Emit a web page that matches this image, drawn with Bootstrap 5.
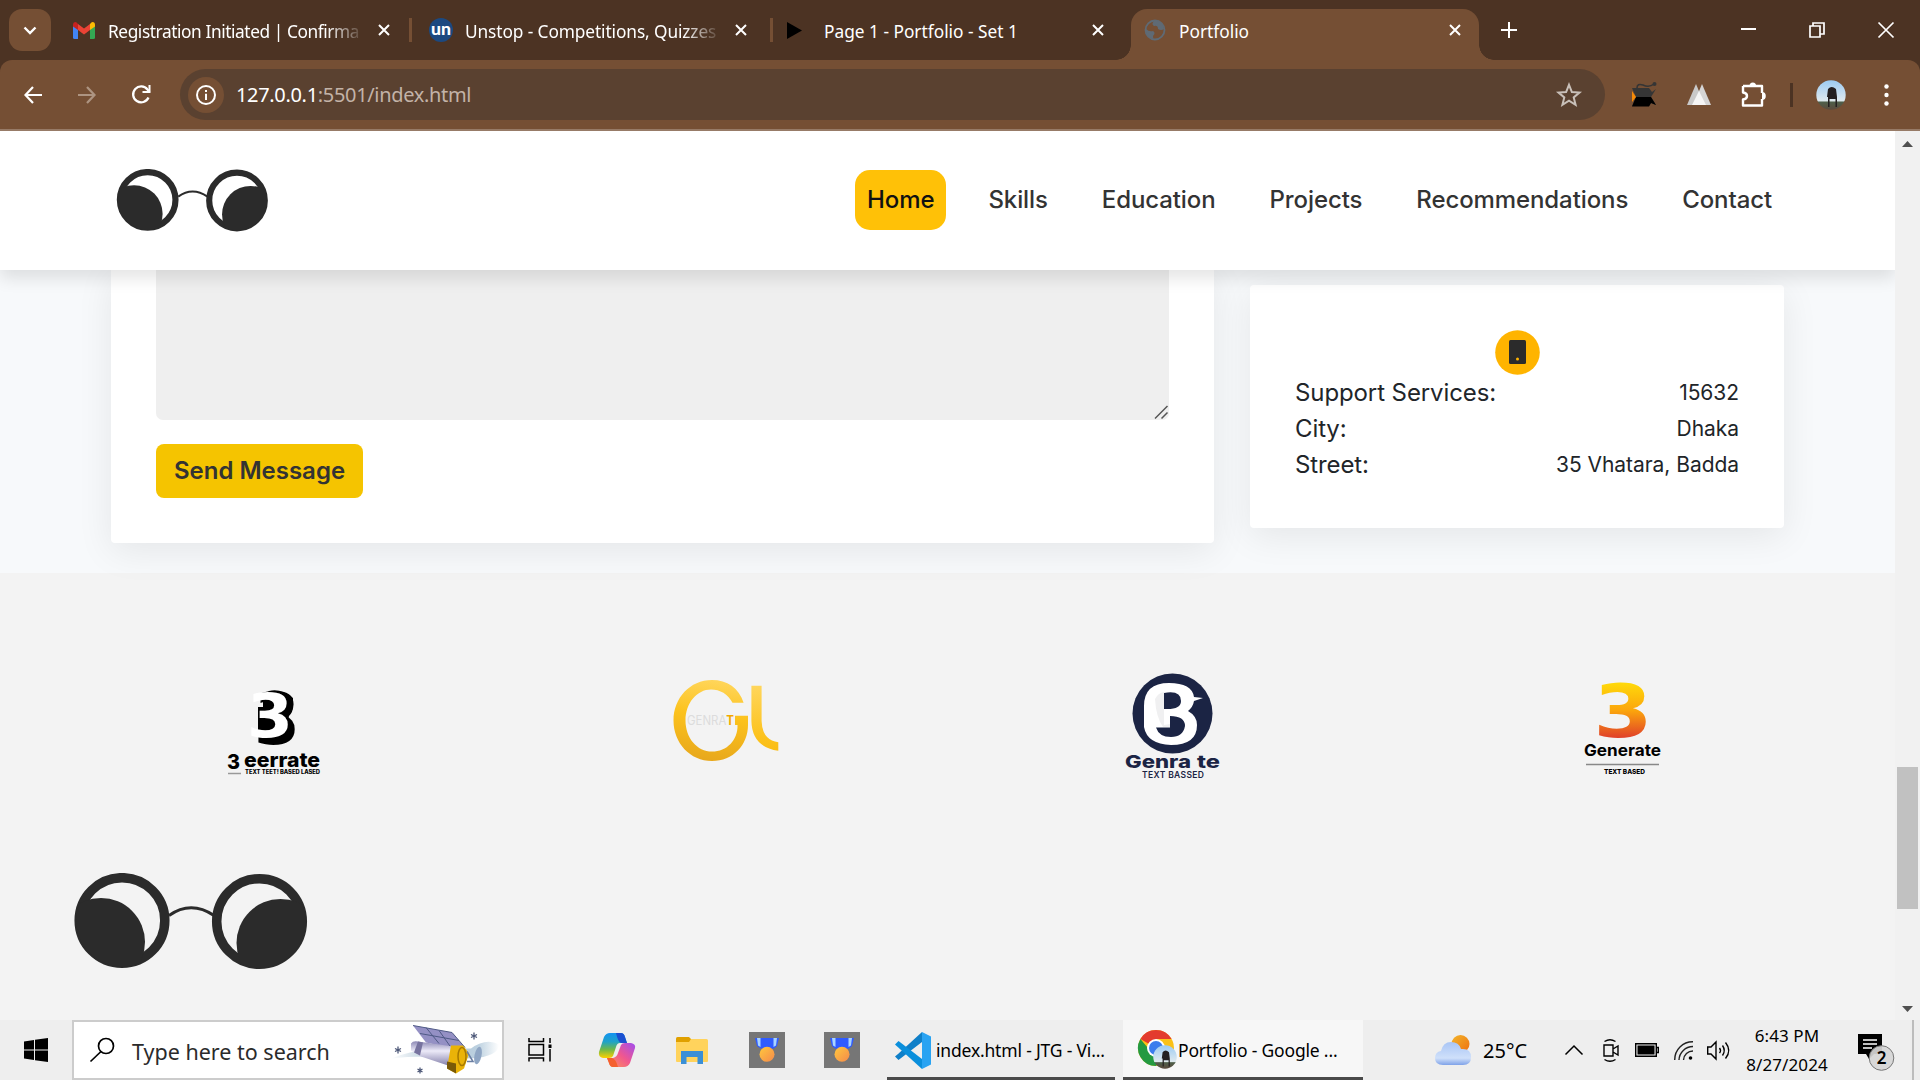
<!DOCTYPE html>
<html lang="en">
<head>
<meta charset="utf-8">
<title>Portfolio</title>
<link href="https://cdn.jsdelivr.net/npm/bootstrap@5.3.0/dist/css/bootstrap.min.css" rel="stylesheet">
<style>
  body { width: 1920px; height: 1080px; overflow: hidden; font-family: "Noto Sans", "Open Sans", sans-serif; color: #000; background: #4c3323; }
  svg { display: block; flex: none; overflow: visible; }
  .ui { white-space: nowrap; line-height: 1; }

  /* browser chrome */
  .tabstrip { height: 60px; background: #4c3323; color: #fff; }
  .tab-menu { width: 42px; height: 42px; margin: 0 9px; border-radius: 13px; background: #754f34; }
  .btab { height: 60px; padding-left: 13px; padding-right: 22px; }
  .btab .ttl { font-size: 17.3px; overflow: hidden; padding: 6px 0 3px; }
  .btab .fade-end { -webkit-mask-image: linear-gradient(90deg, #000 86%, transparent 101%); mask-image: linear-gradient(90deg, #000 86%, transparent 101%); }
  .btab .icon-box { width: 24px; margin-right: 11px; }
  .t1 { width: 352px; } .t2 { width: 361px; padding-left: 17px; padding-right: 26px; } .t3 { width: 358px; } .t4 { width: 348px; }
  .t1 .ttl { letter-spacing: -.42px; }
  .t2 .icon-box { margin-right: 12px; }
  .t2 .ttl { letter-spacing: -.1px; }
  .t3 { padding-left: 11px; }
  .t3 .icon-box { margin-right: 16px; padding-left: 1px; }
  .t3 .x-mark { margin-right: 5px; }
  .t4 { padding-right: 18px !important; }
  .tab-sep { width: 3px; height: 24px; margin-left: -3px; background: #754f34; }
  .tab-live { height: 51px; background: #754f34; border-radius: 16px 16px 0 0; position: relative; align-self: flex-end; padding-bottom: 9px; }
  .tab-live::before, .tab-live::after { content: ""; position: absolute; bottom: 0; width: 15px; height: 15px; }
  .tab-live::before { left: -15px; background: radial-gradient(circle at 0 0, transparent 14.5px, #754f34 15px); }
  .tab-live::after { right: -15px; background: radial-gradient(circle at 100% 0, transparent 14.5px, #754f34 15px); }
  .new-tab { margin-left: 22px; }
  .win-btns > * { width: 68.5px; }
  .toolbar { height: 71px; background: #754f34; border-bottom: 2px solid #977b67; border-radius: 12px 12px 0 0; padding-left: 6px; }
  .slot { width: 54px; display: flex; justify-content: center; flex: none; }
  .slot-w { width: 55px; }
  .slot-dots { width: 57px; }
  .slot-sep { width: 22px; }
  .slot-sep div { width: 3px; height: 24px; background: #4c3323; }
  .omnibox { width: 1425px; height: 51px; border-radius: 26px; background: #5a4130; margin: 0 11px 0 12px; padding: 0 24px 0 8px; }
  .site-chip { width: 36px; height: 36px; background: #754f34; }
  .url { font-size: 20px; letter-spacing: -.33px; color: #fff; margin-left: 12px; }
  .url .dim { color: #c3b3a8; }

  /* portfolio page */
  .viewport { height: 889px; }
  .webpage { width: 1895px; font-family: Inter, "Liberation Sans", sans-serif; background: #f7f9fb; overflow: hidden; }
  .site-head { height: 139px; background: #fff; padding: 0 111px 2px 115.5px; box-shadow: 0 8px 16px rgba(0,0,0,.11); z-index: 2; position: relative; }
  .site-head .navbar-brand svg { margin-top: 2px; }
  .site-head .navbar-nav { gap: 30px; }
  .site-head .nav-link { height: 60px; padding: 0 12px !important; line-height: 60px; font-size: 24px; letter-spacing: -.1px; font-weight: 480; color: #333; border-radius: 15px; white-space: nowrap; }
  .site-head .nav-link.active { background: #ffc107; color: #111; }
  .contact { height: 303px; padding: 0 111px; }
  .panel { background: #fff; border-radius: 4px; box-shadow: 0 8px 36px rgba(0,0,0,.08); }
  .form-panel { width: 1103px; height: 273px; padding: 0 45px; border-radius: 0 0 4px 4px; }
  .msg-box { height: 150px; border-radius: 0 0 7px 7px; background: #efefef; padding: 0 1px 1px 0; }
  .send { width: 207px; height: 54px; margin-top: 24px; padding: 0; border: 0; border-radius: 8px; background: #f5c400; color: #333; font-size: 24px; font-weight: 600; white-space: nowrap; }
  .info-panel { width: 534px; height: 243px; margin-top: 15px; padding: 45px 45px 0; }
  .info-line { height: 36px; font-size: 24px; letter-spacing: -.1px; color: #212529; }
  .info-line .val { font-size: 21px; letter-spacing: -.05px; }
  .foot { height: 447px; background: #f3f3f3; }
  .brands { padding: 100px 0 0; height: 206px; }
  .logo-a { margin: 17px 0 0 227px; }
  .logo-b { margin: 7px 0 0 353px; }
  .logo-c { margin: 0 0 0 346px; }
  .logo-d { margin: 10px 0 0 364px; }
  .foot-logo { margin: 94px 0 0 73.5px; }
  .scroller { width: 25px; background: #f1f1f1; }
  .arrow-up { margin-top: 10px; }
  .thumb { width: 21px; height: 142px; margin-top: 620px; background: #c1c1c1; }

  /* taskbar */
  .taskbar { height: 60px; background: #eee; color: #000; }
  .start { width: 72px; }
  .search { width: 432px; height: 60px; background: #fff; border: 2px solid #ccc; padding-left: 16px; }
  .search .ui { font-size: 21.5px; color: #2b2b2b; margin-left: 18px; padding-top: 3px; }
  .tb { width: 75px; display: flex; justify-content: center; }
  .task-view { margin-left: -3px; }
  .task { height: 60px; border-bottom: 3px solid #4a4a4a; padding-top: 3px; }
  .task .ui { font-size: 17.5px; letter-spacing: -.18px; margin-left: 4px; padding-top: 2px; }
  .task-code { width: 228px; padding-left: 8px; margin-right: 8px; }
  .task-web { width: 240px; padding-left: 15px; background: #f7f7f7; }
  .task-web .ui { margin-left: 0; }
  .tray { margin-left: 72px; }
  .temp { font-size: 20px; width: 60px; margin-left: 12px; padding-top: 2px; }
  .tray-up { margin-left: 22px; }
  .tray-cam { margin-left: 20px; }
  .tray-bat { margin-left: 16px; }
  .tray-wifi { margin-left: 15px; }
  .tray-vol { margin-left: 14px; }
  .clock { width: 96px; margin-left: 9px; font-size: 17px; line-height: 28.5px; padding-top: 1px; letter-spacing: .1px; text-align: center; white-space: nowrap; }
  .notes { margin: 3px 0 0 23px; }
  .peek { width: 2px; height: 60px; margin-left: 17px; background: #bdbdbd; }
</style>
</head>
<body class="d-flex flex-column">

<svg width="0" height="0" class="position-absolute">
  <defs>
    <clipPath id="lensL"><circle cx="48" cy="47.500" r="46"/></clipPath>
    <clipPath id="lensR"><circle cx="185.500" cy="48.500" r="46"/></clipPath>
    <symbol id="glasses" viewBox="0 0 234 97">
      <circle cx="48" cy="47.500" r="42.800" fill="none" stroke="#2b2b2b" stroke-width="9.500"/>
      <circle cx="185.500" cy="48.500" r="42.800" fill="none" stroke="#2b2b2b" stroke-width="9.500"/>
      <circle cx="27" cy="69" r="44" fill="#2b2b2b" clip-path="url(#lensL)"/>
      <circle cx="206.500" cy="70" r="44" fill="#2b2b2b" clip-path="url(#lensR)"/>
      <path d="M95 42.500Q117 27 140 42.500" fill="none" stroke="#2b2b2b" stroke-width="3"/>
    </symbol>
    <symbol id="cross" viewBox="0 0 12 12"><path d="M1 1L11 11M11 1L1 11" stroke="#fff" stroke-width="2" fill="none"/></symbol>
    <symbol id="medal" viewBox="0 0 36 36">
      <rect width="36" height="36" fill="#767676"/>
      <path d="M6 6H30L28 14Q24 18 18 17Q12 18 8 14Z" fill="#2f5bff"/>
      <path d="M8 6h3.500v9l-2.500-1.500ZM24.500 6h3.500l-1 7.500l-2.500 1.500Z" fill="#a9d4ff"/>
      <circle cx="18" cy="22.300" r="7.500" fill="url(#gold)"/>
    </symbol>
    <linearGradient id="gold" x1="0" y1="0" x2="1" y2="1"><stop offset="0" stop-color="#ffc83d"/><stop offset="1" stop-color="#f58a4b"/></linearGradient>
    <linearGradient id="sun" gradientUnits="userSpaceOnUse" x1="0" y1="0" x2="0" y2="55"><stop offset="0" stop-color="#ffd90a"/><stop offset=".5" stop-color="#fba50c"/><stop offset="1" stop-color="#e0402a"/></linearGradient>
    <linearGradient id="amber" gradientUnits="userSpaceOnUse" x1="50" y1="0" x2="40" y2="81"><stop offset="0" stop-color="#ffd65c"/><stop offset=".45" stop-color="#fcc21c"/><stop offset="1" stop-color="#e8a81c"/></linearGradient>
    <linearGradient id="amberL" gradientUnits="userSpaceOnUse" x1="0" y1="5" x2="0" y2="71"><stop offset="0" stop-color="#ffd65c"/><stop offset=".8" stop-color="#fcc21c"/><stop offset="1" stop-color="#fabd15"/></linearGradient>
    <linearGradient id="cpA" x1="0" y1="0" x2="0" y2="1"><stop offset="0" stop-color="#1493f0"/><stop offset=".35" stop-color="#1ea2c9"/><stop offset=".65" stop-color="#6cb84a"/><stop offset="1" stop-color="#ffd000"/></linearGradient>
    <linearGradient id="cpB" x1="1" y1="0" x2="0" y2="1"><stop offset="0" stop-color="#a04df0"/><stop offset=".5" stop-color="#f0578f"/><stop offset="1" stop-color="#ff9a52"/></linearGradient>
    <linearGradient id="cloud" x1="0" y1="0" x2="0" y2="1"><stop offset="0" stop-color="#a9c5f5"/><stop offset=".7" stop-color="#cfe0fa"/><stop offset="1" stop-color="#7fa2e8"/></linearGradient>
    <linearGradient id="dawn" x1="0" y1="0" x2="1" y2="1"><stop offset="0" stop-color="#f2b52a"/><stop offset="1" stop-color="#ee6f10"/></linearGradient>
    <linearGradient id="sky" x1="0" y1="0" x2="0" y2="1"><stop offset="0" stop-color="#9ccbf2"/><stop offset=".7" stop-color="#dfe9ee"/><stop offset=".74" stop-color="#4f5f4a"/><stop offset="1" stop-color="#5b4a3d"/></linearGradient>
    <symbol id="avatar" viewBox="0 0 30 30">
      <circle cx="15" cy="15" r="14.700" fill="url(#sky)"/>
      <path d="M12 9q3.500-4 8 0l1 8v10h-1.500v-8h-6v8H12V17h-1Z" fill="#231f20"/>
    </symbol>
    <linearGradient id="metal" x1="0" y1="0" x2="0" y2="1"><stop offset="0" stop-color="#8d89b5"/><stop offset=".4" stop-color="#eceaf8"/><stop offset="1" stop-color="#8581ac"/></linearGradient>
    <linearGradient id="haze" x1="0" y1="0" x2="1" y2="0"><stop offset="0" stop-color="#fff"/><stop offset=".4" stop-color="#a9c2d3"/><stop offset=".8" stop-color="#b4cbdc"/><stop offset="1" stop-color="#fff"/></linearGradient>
  </defs>
</svg>

<div class="tabstrip d-flex align-items-center">
  <div class="tab-menu d-flex align-items-center justify-content-center"><svg width="14" height="9" viewBox="0 0 14 9"><path d="M1.500 1.500L7 7L12.500 1.500" fill="none" stroke="#fff" stroke-width="2.400"/></svg></div>
  <div class="btab t1 d-flex align-items-center">
    <div class="icon-box"><svg width="22" height="17" viewBox="0 0 22 17"><path d="M0 3v12.500Q0 17 1.500 17H5V7Z" fill="#4285f4"/><path d="M22 3v12.500Q22 17 20.500 17H17V7Z" fill="#34a853"/><path d="M5 2L11 6.500L17 2V8L11 12.500L5 8Z" fill="#ea4335"/><path d="M0 3Q0 0 2.500 0Q3.500 0 5 2V8L0 4.500Z" fill="#c5221f"/><path d="M22 3Q22 0 19.500 0Q18.500 0 17 2V8L22 4.500Z" fill="#fbbc04"/></svg></div>
    <div class="ttl ui fade-end flex-fill">Registration Initiated | Confirma</div>
    <svg class="ms-3" width="12" height="12"><use href="#cross"/></svg>
  </div>
  <div class="tab-sep"></div>
  <div class="btab t2 d-flex align-items-center">
    <div class="icon-box"><svg width="24" height="24" viewBox="0 0 24 24"><circle cx="12" cy="12" r="12" fill="#1c4980"/><text x="12" y="17" text-anchor="middle" font-family="Lato, sans-serif" font-weight="900" font-size="17" fill="#fff" textLength="20" lengthAdjust="spacingAndGlyphs">un</text></svg></div>
    <div class="ttl ui fade-end flex-fill">Unstop - Competitions, Quizzes</div>
    <svg class="ms-3" width="12" height="12"><use href="#cross"/></svg>
  </div>
  <div class="tab-sep"></div>
  <div class="btab t3 d-flex align-items-center">
    <div class="icon-box"><svg width="17" height="17" viewBox="0 0 17 17"><path d="M2 0L17 8.500L2 17Z" fill="#000"/></svg></div>
    <div class="ttl ui flex-fill">Page 1 - Portfolio - Set 1</div>
    <svg class="x-mark" width="12" height="12"><use href="#cross"/></svg>
  </div>
  <div class="btab t4 tab-live d-flex align-items-center">
    <div class="icon-box"><svg width="22" height="22" viewBox="0 0 22 22"><circle cx="11" cy="11" r="9.500" fill="none" stroke="#5f6a74" stroke-width="1.800"/><path d="M2 10Q5 13 9 12Q12 14 9 17Q10 19 8 20Q1 17 2 10ZM10 2Q7 5 10 7Q14 6 14 10Q17 12 20 10Q19 3 12 1.500Z" fill="#5f6a74"/></svg></div>
    <div class="ttl ui flex-fill">Portfolio</div>
    <svg width="12" height="12"><use href="#cross"/></svg>
  </div>
  <svg class="new-tab" width="16" height="16" viewBox="0 0 16 16"><path d="M8 0V16M0 8H16" stroke="#fff" stroke-width="2"/></svg>
  <div class="win-btns d-flex align-items-center ms-auto">
    <div><svg class="mx-auto" width="15" height="16" viewBox="0 0 15 16"><path d="M0 7H15" stroke="#fff" stroke-width="2"/></svg></div>
    <div><svg class="mx-auto" width="16" height="16" viewBox="0 0 16 16"><path d="M1 4H11V15H1ZM4 4V1H15V12H11" fill="none" stroke="#fff" stroke-width="1.700"/></svg></div>
    <div><svg class="mx-auto" width="16" height="16" viewBox="0 0 16 16"><path d="M.5.5L15.500 15.500M15.500.5L.5 15.500" stroke="#fff" stroke-width="1.700"/></svg></div>
  </div>
</div>

<div class="toolbar d-flex align-items-center">
  <div class="slot"><svg width="18" height="18" viewBox="0 0 18 18"><path d="M18 9H1.500M9 1L1.500 9L9 17" fill="none" stroke="#fff" stroke-width="2.200"/></svg></div>
  <div class="slot"><svg width="18" height="18" viewBox="0 0 18 18"><path d="M0 9H16.500M9 1L16.500 9L9 17" fill="none" stroke="#ad9481" stroke-width="2.200"/></svg></div>
  <div class="slot"><svg width="19" height="19" viewBox="0 0 19 19"><path d="M16.500 12.500A8 8 0 1 1 15.500 4.500L17.500 7" fill="none" stroke="#fff" stroke-width="2.300"/><path d="M18.500 0V8H10.500V6H16.500V0Z" fill="#fff"/></svg></div>
  <div class="omnibox d-flex align-items-center">
    <div class="site-chip rounded-circle d-flex align-items-center justify-content-center"><svg width="20" height="20" viewBox="0 0 20 20"><circle cx="10" cy="10" r="9" fill="none" stroke="#fff" stroke-width="2"/><path d="M10 8.800V15M10 5V7" stroke="#fff" stroke-width="2"/></svg></div>
    <div class="url ui">127.0.0.1<span class="dim">:5501/index.html</span></div>
    <svg class="ms-auto" width="24" height="24" viewBox="0 0 24 24"><path d="M12 1.800L14.900 9L22.500 9.500L16.700 14.400L18.600 21.800L12 17.700L5.400 21.800L7.300 14.400L1.500 9.500L9.100 9Z" fill="none" stroke="#c9c0b9" stroke-width="2"/></svg>
  </div>
  <div class="slot slot-w"><svg width="26" height="26" viewBox="0 0 26 26"><path d="M1 6H18L21 10L25 7L20 15L25 23L20 21L18 24H1L5 15Z" fill="#353535"/><path d="M5 15H20L25 23L20 21L18 24.500H1Z" fill="#000"/><path d="M1 9V20L5 15Z" fill="#f58a07"/><path d="M6 6Q6 1 12 3Q18 6 23 2" fill="none" stroke="#353535" stroke-width="1.600"/><circle cx="23.500" cy="2" r="2" fill="#353535"/></svg></div>
  <div class="slot slot-w"><svg width="24" height="21" viewBox="0 0 24 21"><path d="M0 21L9 0L14 12V21Z" fill="#c9c9c9"/><path d="M24 21L15 0L10 12V21Z" fill="#d5d5d5"/><path d="M5 21L12 7L19 21Z" fill="#f5f5f5"/></svg></div>
  <div class="slot"><svg width="25" height="25" viewBox="0 0 25 25"><path d="M2 4H21V11M2 4V10.500Q6 11 6 14Q6 17 2 17.500V23.500H21V17" fill="none" stroke="#fff" stroke-width="2.400" stroke-linejoin="round"/><path d="M8.500 4a3.300 3.500 0 0 1 6.600 0ZM21 10a3.500 3.700 0 0 1 0 8Z" fill="#fff"/></svg></div>
  <div class="slot-sep"><div class="mx-auto"></div></div>
  <div class="slot slot-dots"><svg width="30" height="30"><use href="#avatar"/></svg></div>
  <div class="slot"><svg width="5" height="22" viewBox="0 0 5 22"><g fill="#fff"><circle cx="2.500" cy="2.500" r="2.200"/><circle cx="2.500" cy="11" r="2.200"/><circle cx="2.500" cy="19.500" r="2.200"/></g></svg></div>
</div>

<div class="viewport d-flex">
  <main class="webpage">
    <header class="site-head navbar navbar-expand flex-nowrap">
      <a class="navbar-brand p-0 m-0" href="#"><svg width="153" height="63"><use href="#glasses"/></svg></a>
      <ul class="navbar-nav ms-auto">
        <li class="nav-item"><a class="nav-link active" href="#">Home</a></li>
        <li class="nav-item"><a class="nav-link" href="#">Skills</a></li>
        <li class="nav-item"><a class="nav-link" href="#">Education</a></li>
        <li class="nav-item"><a class="nav-link" href="#">Projects</a></li>
        <li class="nav-item"><a class="nav-link" href="#">Recommendations</a></li>
        <li class="nav-item"><a class="nav-link" href="#">Contact</a></li>
      </ul>
    </header>
    <section class="contact d-flex justify-content-between align-items-start">
      <div class="panel form-panel">
        <div class="msg-box d-flex justify-content-end align-items-end"><svg width="13" height="13" viewBox="0 0 13 13"><path d="M0 12.500L12.500 0M6.500 12.500L12.500 6.500" stroke="#555" stroke-width="1.500"/></svg></div>
        <button class="btn send">Send Message</button>
      </div>
      <div class="panel info-panel">
        <svg class="mx-auto" width="45" height="45" viewBox="0 0 45 45"><circle cx="22.500" cy="22.500" r="22.300" fill="#ffb400"/><rect x="14" y="10" width="17" height="24" rx="1.500" fill="#2b2b2b"/><circle cx="22.500" cy="29" r="1.500" fill="#ffb400"/></svg>
        <div class="info-line d-flex justify-content-between align-items-center"><span>Support Services:</span><span class="val">15632</span></div>
        <div class="info-line d-flex justify-content-between align-items-center"><span>City:</span><span class="val">Dhaka</span></div>
        <div class="info-line d-flex justify-content-between align-items-center"><span>Street:</span><span class="val">35 Vhatara, Badda</span></div>
      </div>
    </section>
    <footer class="foot">
      <div class="brands d-flex align-items-start">
        <svg class="logo-a" width="93" height="86" viewBox="0 0 93 86">
          <g font-family="Inter, sans-serif" font-weight="800">
            <text x="27" y="53.500" font-family="DejaVu Sans, sans-serif" font-weight="700" font-size="71" textLength="46" lengthAdjust="spacingAndGlyphs">3</text>
            <path d="M36 6L42 1Q54-2 66 8V14H61V17H66Q66 22 62 26L58 46H31V17H36Z"/>
            <text x="20" y="47" font-family="DejaVu Sans, sans-serif" font-weight="700" font-size="60" textLength="46" lengthAdjust="spacingAndGlyphs" fill="#fff">3</text>
            <text x="0" y="79" font-size="20" textLength="13" lengthAdjust="spacingAndGlyphs">3</text>
            <text x="17" y="77" font-size="20" textLength="76" lengthAdjust="spacingAndGlyphs">eerrate</text>
            <text x="18" y="84" font-size="5.500" textLength="75" lengthAdjust="spacingAndGlyphs">TEXT TEET! BASED LASED</text>
          </g>
          <path d="M1 83.500H14" stroke="#999" stroke-width="1.500"/>
        </svg>
        <svg class="logo-b" width="106" height="81" viewBox="0 0 106 81">
          <path d="M70.600 22.700C66 8 54 0 39 0C17 0 .5 18 .5 40.500S17 81 39 81C60 81 75 65 75 45V35.700H62V45H64.500C65 60 54 71.600 39 71.600C24 71.600 12.500 58 12.500 40.500S24 9.500 38 9.500C47 9.500 55 14 59.500 22.700Z" fill="url(#amber)"/>
          <path d="M78.400 5.700H88.600V41Q89 60 105.300 62.300V70.700Q79 67 78.400 41Z" fill="url(#amberL)"/>
          <text x="14" y="45" font-family="Inter, sans-serif" font-size="12.500" textLength="47" lengthAdjust="spacingAndGlyphs" fill="#dcdcdc">GENRA<tspan font-weight="700" fill="#f2a900">T</tspan></text>
        </svg>
        <svg class="logo-c" width="95" height="106" viewBox="0 0 95 106">
          <circle cx="47.500" cy="40.500" r="40" fill="#1b2444"/>
          <path d="M19 54V33Q19 10 44 10Q67 10 69 24L78 25L69 28Q68 34 63 38Q72 43 72 52Q72 72 46 72Q22 71 19 54Z" fill="#fff"/>
          <path d="M30 26Q33 20 39 19V52L45 51V54H38Q31 44 30 26Z" fill="#f0f0f1"/>
          <path d="M39 20Q56 17 56 28Q56 37 39 36ZM45 43Q60 43 60 53Q58 64 46 64Q34 64 31 54.500H45Z" fill="#1b2444"/>
          <g font-family="Inter, sans-serif" fill="#1b2444">
            <text x="0" y="94.500" font-size="17.500" font-weight="800" textLength="66" lengthAdjust="spacingAndGlyphs">Genra</text>
            <text x="72" y="94.500" font-size="17.500" font-weight="800" textLength="23" lengthAdjust="spacingAndGlyphs">te</text>
            <text x="17" y="105" font-size="8.500" font-weight="600" textLength="62" lengthAdjust="spacing">TEXT BASSED</text>
          </g>
        </svg>
        <svg class="logo-d" width="77" height="92" viewBox="0 0 77 92">
          <g font-family="Inter, sans-serif" font-weight="800">
            <text x="9.500" y="54" font-family="DejaVu Sans, sans-serif" font-weight="700" font-size="73" textLength="59" lengthAdjust="spacingAndGlyphs" fill="url(#sun)">3</text>
            <text x="0" y="73" font-size="16.500" font-weight="700" textLength="77" lengthAdjust="spacingAndGlyphs">Generate</text>
            <text x="20" y="91" font-size="6.500" textLength="41" lengthAdjust="spacingAndGlyphs">TEXT BASED</text>
          </g>
          <path d="M2 81.500H75" stroke="#888" stroke-width="1.300"/>
        </svg>
      </div>
      <svg class="foot-logo" width="234" height="97"><use href="#glasses"/></svg>
    </footer>
  </main>
  <div class="scroller d-flex flex-column align-items-center">
    <svg class="arrow-up" width="11" height="6" viewBox="0 0 11 6"><path d="M5.500 0L11 6H0Z" fill="#505050"/></svg>
    <div class="thumb"></div>
    <svg class="mt-auto mb-2" width="11" height="6" viewBox="0 0 11 6"><path d="M5.500 6L11 0H0Z" fill="#505050"/></svg>
  </div>
</div>

<div class="taskbar d-flex align-items-center">
  <div class="start"><svg class="mx-auto" width="24" height="24" viewBox="0 0 24 24"><path d="M0 3.400L10 2V11.500H0ZM11 1.800L24 0V11.500H11ZM0 12.500H10V22L0 20.600ZM11 12.500H24V24L11 22.200Z"/></svg></div>
  <div class="search d-flex align-items-center">
    <svg width="24" height="24" viewBox="0 0 24 24"><circle cx="16" cy="8" r="7.500" fill="none" stroke="#000" stroke-width="1.700"/><path d="M11 13.500L.5 23.500" stroke="#000" stroke-width="1.700"/></svg>
    <div class="ui">Type here to search</div>
    <svg class="ms-auto" width="110" height="56" viewBox="1 1.500 110 56">
      <path d="M0 38Q20 30 40 29T80 28Q95 17 108 24Q108 36 80 38Q30 34 0 38Z" fill="url(#haze)" opacity=".9"/>
      <path d="M22 5L61 12L74 27L62 28L35 22Z" fill="#9490c4"/>
      <path d="M22 5L61 12L74 27M35 7L48 23M48 10L60 27M29 13L68 20" fill="none" stroke="#4f5a86" stroke-width="1"/>
      <path d="M20 23Q22 20 27 21L62 26L57 45L30 36L20 30Z" fill="url(#metal)"/>
      <path d="M27 21L32 22L29 35L23 32Z" fill="#77739f"/>
      <path d="M60 25L72 25L78 33L73 48L65 53L56 48Z" fill="#eab308"/>
      <path d="M56 41L65 43L65 53L56 48Z" fill="#7a5a08"/>
      <ellipse cx="71" cy="36" rx="4" ry="9" fill="none" stroke="#a87a00" stroke-width="1.500"/>
      <path d="M76 31L82 41H76" fill="none" stroke="#6b7fa3" stroke-width="1.500"/>
      <ellipse cx="87" cy="35" rx="3.500" ry="9" fill="#8fa6c4" transform="rotate(12 87 35)"/>
      <g stroke="#4d5878" stroke-width="1.300"><path d="M7 26V33M4 28L10 31M10 28L4 31M83 12V19M80 14L86 17M86 14L80 17M29 47V53M26.500 48.500L31.500 51.500M31.500 48.500L26.500 51.500"/></g>
    </svg>
  </div>
  <div class="tb"><svg class="task-view" width="24" height="24" viewBox="0 0 24 24"><path d="M1 0V3.500H15.500V0M1 6.500H15.500V17H1ZM1 23.500V20H15.500V23.500M22 0V5M22 11V23.500" fill="none" stroke="#000" stroke-width="1.500"/><rect x="20.500" y="6.500" width="3" height="3.500"/></svg></div>
  <div class="tb"><svg width="36" height="34" viewBox="0 0 36 34"><path d="M11 0H22Q25 0 26 4L28 10H21Q18 10 17 14L14 23Q13 25 10 25H4Q-1 24 0 19L5 4Q7 0 11 0Z" fill="url(#cpA)"/><path d="M17 0H22Q25 0 26 4L28 10H22Q19 9 17 0Z" fill="#1b4fd0"/><path d="M25 34H14Q11 34 10 30L8 25H14Q18 24 19 20L22 12Q23 10 26 10H32Q37 11 36 15L31 30Q29 34 25 34Z" fill="url(#cpB)"/><path d="M19 34H14Q11 34 10 30L8 25H13Q17 26 19 34Z" fill="#f4602f"/></svg></div>
  <div class="tb"><svg width="32" height="27" viewBox="0 0 32 27"><path d="M0 1.500Q0 0 1.500 0H13L15 2V6H0Z" fill="#e0a000"/><path d="M0 5H13L15 2H30.500Q32 2 32 3.500V24Q32 25 31 25H1Q0 25 0 24Z" fill="#ffd35c"/><path d="M5 14H27V27H21.500V20H10.500V27H5Z" fill="#3a8fd6"/></svg></div>
  <div class="tb"><svg width="36" height="36"><use href="#medal"/></svg></div>
  <div class="tb"><svg width="36" height="36"><use href="#medal"/></svg></div>
  <div class="task task-code d-flex align-items-center ms-2">
    <svg width="37" height="37" viewBox="0 0 37 37"><path d="M27 0L36 4.500V32.500L27 37Z" fill="#29a3f2"/><path d="M27 0L3 22L0 24.500L3.500 28L27 10Z" fill="#0f7fc8"/><path d="M27 37L0 12.500L3.500 9L27 27Z" fill="#0a8fdc"/></svg>
    <div class="ui">index.html - JTG - Vi...</div>
  </div>
  <div class="task task-web d-flex align-items-center">
    <svg width="40" height="40" viewBox="0 0 40 40"><circle cx="18" cy="18" r="18" fill="#fbc116"/><path d="M18 18L2.400 9A18 18 0 0 1 33.600 9H18Z" fill="#e33b2e"/><path d="M2.400 9A18 18 0 0 0 18 36L26 22.500L18 18H10Z" fill="#249a41"/><circle cx="18" cy="18" r="9" fill="#fff"/><circle cx="18" cy="18" r="7" fill="#3b7ded"/><svg x="15" y="15" width="24" height="24"><use href="#avatar"/></svg></svg>
    <div class="ui">Portfolio - Google ...</div>
  </div>
  <div class="tray d-flex align-items-center">
    <svg width="36" height="30" viewBox="0 0 36 30"><circle cx="25.500" cy="9" r="9" fill="url(#dawn)"/><path d="M8 30Q0 30 0 23Q0 17 6 16Q8 7 16 7Q24 7 26 14Q36 13 36 22Q36 30 28 30Z" fill="url(#cloud)"/></svg>
    <div class="ui temp">25°C</div>
    <svg class="tray-up" width="18" height="10" viewBox="0 0 18 10"><path d="M.5 9.500L9 1L17.500 9.500" fill="none" stroke="#000" stroke-width="1.500"/></svg>
    <svg class="tray-cam" width="16" height="23" viewBox="0 0 16 23"><path d="M1 6H10V17H1ZM10 10L15 7V16L10 13M1.500 2.500Q7-1 12.500 2.500M1.500 20.500Q7 24 12.500 20.500" fill="none" stroke="#000" stroke-width="1.400"/></svg>
    <svg class="tray-bat" width="24" height="14" viewBox="0 0 24 14"><path d="M.7.7H21.300V13.300H.7ZM21.500 4.500H23.300V9.500H21.500" fill="none" stroke="#000" stroke-width="1.400"/><rect x="2.500" y="2.500" width="17" height="9"/></svg>
    <svg class="tray-wifi" width="19" height="19" viewBox="0 0 19 19"><g fill="none" stroke="#222" stroke-width="1.400"><path d="M.7 19A18 18 0 0 1 19 .7M5 19A14 14 0 0 1 19 5.500M9.500 19A9.500 9.500 0 0 1 19 10"/></g><circle cx="16.500" cy="17" r="1.800"/></svg>
    <svg class="tray-vol" width="23" height="19" viewBox="0 0 23 19"><g fill="none" stroke="#000" stroke-width="1.400"><path d="M.7 6H4L9 1V18L4 13H.7ZM12.500 7Q14.500 9.500 12.500 12M15.500 4.500Q19 9.500 15.500 14.500M18.500 1.500Q25 9.500 18.500 17.500"/></g></svg>
    <div class="clock">6:43 PM<br>8/27/2024</div>
    <svg class="notes" width="37" height="38" viewBox="0 0 37 38"><path d="M0 1H24V21H16L11 26L8 21H0Z"/><path d="M5 7H19M5 11H19M5 15H14" stroke="#fff" stroke-width="1.300"/><circle cx="23.500" cy="25" r="12.300" fill="#d6d6d6" fill-opacity=".92" stroke="#777" stroke-width="1"/><text x="23.500" y="31" text-anchor="middle" font-size="17" font-weight="600" font-family="Noto Sans, sans-serif">2</text></svg>
    <div class="peek"></div>
  </div>
</div>
<script src="https://cdn.jsdelivr.net/npm/bootstrap@5.3.0/dist/js/bootstrap.bundle.min.js"></script>
</body>
</html>
